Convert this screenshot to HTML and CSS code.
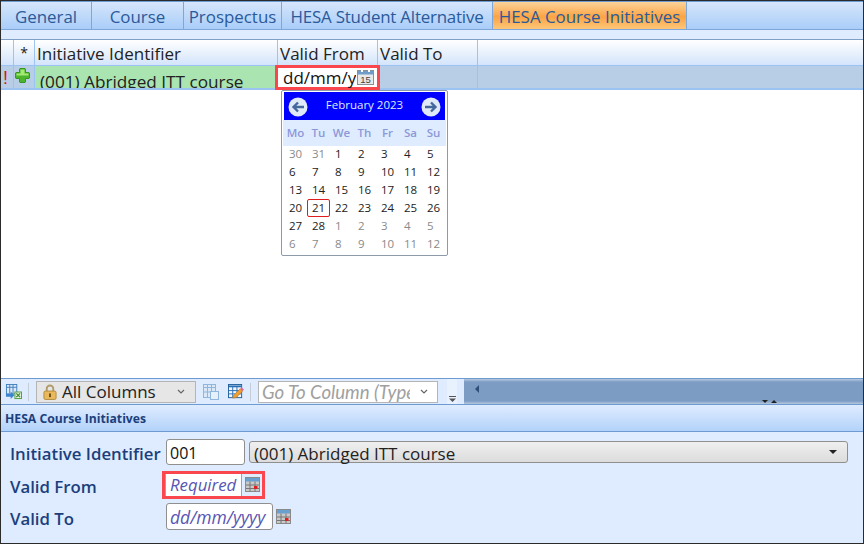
FILE: index.html
```html
<!DOCTYPE html>
<html lang="en">
<head>
<meta charset="utf-8">
<title>HESA Course Initiatives</title>
<link rel="stylesheet" href="styles.css">
</head>
<body>
<div class="app">
  <nav class="tabs">
    <div class="tab t1">General</div>
    <div class="tab t2">Course</div>
    <div class="tab t3">Prospectus</div>
    <div class="tab t4">HESA Student Alternative</div>
    <div class="tab t5 active">HESA Course Initiatives</div>
  </nav>
  <div class="band"></div>
  <section class="grid">
    <div class="ghead">
      <div class="c c0"></div>
      <div class="c c1 star">*</div>
      <div class="c c2">Initiative Identifier</div>
      <div class="c c3">Valid From</div>
      <div class="c c4">Valid To</div>
      <div class="c c5"></div>
    </div>
    <div class="grow">
      <div class="c c0 bang">!</div>
      <div class="c c1">
        <svg class="plus" width="15" height="15" viewBox="0 0 15 15"><path d="M5 .5h5l.5.5v3.500H14l.5.500v5l-.5.500h-3.500V14l-.5.500H5l-.5-.500v-3.500H1l-.5-.500V5L1 4.500h3.500V1z" fill="#4cb52c" stroke="#3a9424"/><path d="M5.500 1.500h4v4h4v2h-12v-2h4z" fill="#a4ea72"/></svg>
      </div>
      <div class="c c2 green"><span class="clip">(001) Abridged ITT course</span></div>
      <div class="c c3 edit">
        <span class="editor">dd/mm/yyyy</span>
        <svg class="cal15" width="17" height="15" viewBox="0 0 17 15"><rect x=".5" y=".5" width="16" height="14" fill="#e9e9e9" stroke="#8a8f96"/><rect x="1" y="1" width="15" height="3.500" fill="#6f9cc8"/><rect x="4" y="0" width="2" height="2" fill="#fff"/><rect x="11" y="0" width="2" height="2" fill="#fff"/><text x="8.500" y="13" font-size="9.500" text-anchor="middle" fill="#444" font-family="Liberation Sans">15</text></svg>
      </div>
      <div class="c c4"></div>
      <div class="c c5"></div>
    </div>
    <div class="calendar">
      <div class="calhead">
        <span class="navbtn"><svg width="20" height="20" viewBox="0 0 20 20"><circle cx="10" cy="10" r="9.500" fill="#dfe9f8"/><path d="M16 10H6M10 5.500 5.500 10l4.500 4.500" fill="none" stroke="#44689c" stroke-width="2.400"/></svg></span>
        <span class="month">February 2023</span>
        <span class="navbtn"><svg width="20" height="20" viewBox="0 0 20 20"><circle cx="10" cy="10" r="9.500" fill="#dfe9f8"/><path d="M4 10h10M10 5.500 14.500 10 10 14.500" fill="none" stroke="#44689c" stroke-width="2.400"/></svg></span>
      </div>
      <div class="week dow"><span>Mo</span><span>Tu</span><span>We</span><span>Th</span><span>Fr</span><span>Sa</span><span>Su</span></div>
      <div class="days">
        <span class="o">30</span><span class="o">31</span><span>1</span><span>2</span><span>3</span><span>4</span><span>5</span>
        <span>6</span><span>7</span><span>8</span><span>9</span><span>10</span><span>11</span><span>12</span>
        <span>13</span><span>14</span><span>15</span><span>16</span><span>17</span><span>18</span><span>19</span>
        <span>20</span><span class="today">21</span><span>22</span><span>23</span><span>24</span><span>25</span><span>26</span>
        <span>27</span><span>28</span><span class="o">1</span><span class="o">2</span><span class="o">3</span><span class="o">4</span><span class="o">5</span>
        <span class="o">6</span><span class="o">7</span><span class="o">8</span><span class="o">9</span><span class="o">10</span><span class="o">11</span><span class="o">12</span>
      </div>
    </div>
  </section>
  <div class="toolbar">
    <div class="tools">
      <svg class="ic first" width="17" height="16" viewBox="0 0 18 17"><rect x="1.500" y=".5" width="11" height="10" fill="#dbe8f8" stroke="#3f7fbf"/><path d="M1.500 3.500h11M5 1v9M8.500 1v9" stroke="#3f7fbf"/><path d="M1 10.500h5V8l4 4-4 4v-2.500H1z" fill="#3d84d0"/><rect x="10.500" y="8.500" width="7" height="7" fill="#e4f2dc" stroke="#4f9a3c"/><path d="m12 10 4 4m0-4-4 4" stroke="#3c8a2c" stroke-width="1.300"/></svg>
      <span class="sep"></span>
      <div class="combo">
        <svg class="lock" width="14" height="16" viewBox="0 0 15 17"><path d="M4 8V5a3.500 3.500 0 0 1 7 0v3" fill="none" stroke="#b09a6a" stroke-width="2"/><rect x="1" y="7.500" width="13" height="9" rx="1.500" fill="#e9b95c" stroke="#b08a3c"/><rect x="6.500" y="10" width="2" height="4" fill="#6b4c16"/></svg>
        <span class="combotext">All Columns</span>
        <svg class="chev" width="8" height="5" viewBox="0 0 8 5"><path d="m1 1 3 3 3-3" fill="none" stroke="#666" stroke-width="1.200"/></svg>
      </div>
      <svg class="ic dim" width="16" height="17" viewBox="0 0 16 17"><rect x=".5" y="1.500" width="12" height="13" fill="#dbe8f8" stroke="#8fb6dd"/><path d="M.5 4.500h12M4.500 2v12M8.500 2v12M1 9h11" stroke="#8fb6dd"/><rect x="7.500" y="8.500" width="8" height="8" fill="#e6f0fb" stroke="#8fb6dd"/></svg>
      <svg class="ic" width="16" height="16" viewBox="0 0 17 17"><rect x=".5" y=".5" width="14" height="14" fill="#f2f6fb" stroke="#1f5f9f"/><path d="M1 1.500h13v2H1z" fill="#2a6fb5"/><path d="M5 3v11M9.500 3v11M1 7h13M1 10.500h13" stroke="#2a6fb5"/><path d="m5 15 1-3 7-7 2.500 2.500-7 7z" fill="#f0a030" stroke="#c06a10" stroke-width=".6"/><path d="m13 5 1.500-1.500L17 6l-1.500 1.500z" fill="#d86aa0"/></svg>
      <span class="sep"></span>
      <div class="goto">
        <span class="gototext">Go To Column (Type</span>
        <svg class="chev2" width="8" height="5" viewBox="0 0 8 5"><path d="m1 1 3 3 3-3" fill="none" stroke="#666" stroke-width="1.200"/></svg>
      </div>
      <div class="overflow"><svg width="7" height="6" viewBox="0 0 7 6"><path d="M0 0h7v1H0zM0 2.500h7L3.500 6z" fill="#555"/></svg></div>
    </div>
    <div class="hscroll">
      <span class="leftarrow"></span>
      <span class="grip"><i class="down"></i><i class="up"></i></span>
    </div>
  </div>
  <h2 class="panelhead">HESA Course Initiatives</h2>
  <form class="panel">
    <div class="frow r1">
      <label class="lab">Initiative Identifier</label>
      <span class="input code">001</span>
      <div class="select"><span>(001) Abridged ITT course</span><svg width="8" height="4" viewBox="0 0 8 4"><path d="M0 0h8L4 4z" fill="#222"/></svg></div>
    </div>
    <div class="frow r2">
      <label class="lab">Valid From</label>
      <div class="hilite">
        <span class="input req">Required</span>
        <svg class="ic16" width="15" height="15" viewBox="0 0 15 15"><rect x=".5" y=".5" width="14" height="14" fill="#c9c9c9" stroke="#8a8a8a"/><rect x="1" y="1" width="13" height="3.500" fill="#6aa0d0"/><path d="M5 4.500v10M10 4.500v10M1 8h13M1 11.500h13" stroke="#777"/><rect x="9" y="9" width="3.500" height="3" fill="#e02020"/></svg>
      </div>
    </div>
    <div class="frow r3">
      <label class="lab">Valid To</label>
      <span class="input date">dd/mm/yyyy</span>
      <svg class="ic16" width="15" height="15" viewBox="0 0 15 15"><rect x=".5" y=".5" width="14" height="14" fill="#c9c9c9" stroke="#8a8a8a"/><rect x="1" y="1" width="13" height="3.500" fill="#6aa0d0"/><path d="M5 4.500v10M10 4.500v10M1 8h13M1 11.500h13" stroke="#777"/><rect x="9" y="9" width="3.500" height="3" fill="#e02020"/></svg>
    </div>
  </form>
</div>
</body>
</html>
```
FILE: styles.css
```css
* { box-sizing: border-box; }
html, body { margin: 0; padding: 0; }
body { width: 864px; height: 544px; overflow: hidden; font-family: "Open Sans", "Liberation Sans", sans-serif; background: #fff; }
.app { width: 864px; height: 544px; display: flex; flex-direction: column; border: 1px solid #2b2b2b; }

.tabs { height: 29px; flex: none; display: flex; border-top: 1px solid #6d9ad0; border-bottom: 1px solid #7ea6d8; background: linear-gradient(#d6e6fb, #a9cdf9); }
.tab { height: 27px; border-right: 1px solid #7ea6d8; font-size: 16.900px; line-height: 29px; color: #2a5a9a; text-align: center; white-space: nowrap; flex: none; }
.t1 { width: 91px; }
.t2 { width: 92px; }
.t3 { width: 98px; }
.t4 { width: 211px; letter-spacing: -.2px; }
.t5 { width: 194px; }
.active { background: linear-gradient(#fbd39b, #fba443 55%, #fdc67a); }

.band { height: 10px; flex: none; background: #dfecff; border-bottom: 1px solid #7f9fc4; }

.grid { flex: 1; position: relative; background: #fff; min-height: 0; }
.ghead { height: 26px; display: flex; background: linear-gradient(#fff, #d3e4fb); border-bottom: 1px solid #9cc3f2; }
.grow { height: 24px; display: flex; background: #b8cde6; border-bottom: 2px solid #9cc3f2; position: relative; }
.c { flex: none; border-right: 1px solid #9cc3f2; font-size: 17px; line-height: 27px; color: #222; padding-left: 2px; white-space: nowrap; overflow: hidden; }
.c0 { width: 13px; padding: 0; }
.c1 { width: 21px; padding: 0; }
.c2 { width: 243px; }
.c3 { width: 100px; }
.c4 { width: 100px; }
.c5 { flex: 1; border-right: 0; }
.star { text-align: center; line-height: 26px; font-size: 14px; }
.bang { color: #e01010; font-family: "Liberation Sans", sans-serif; font-size: 18px; line-height: 24px; padding-left: 2px; }
.plus { display: block; margin: 2px 0 0 1px; }
.green { background: #a9e4b1; }
.clip { display: block; height: 22px; line-height: 31px; overflow: hidden; padding-left: 3px; font-size: 17.200px; }
.c3.edit { position: relative; z-index: 2; width: 105px; height: 25px; margin: -1px -2px 0 -3px; border: 3px solid #f9474d; background: #fff; display: flex; align-items: center; padding: 0 0 0 5px; overflow: visible; }
.editor { font-size: 17px; width: 73px; flex: none; color: #111; line-height: 21px; overflow: hidden; white-space: nowrap; margin-right: 1px; }
.cal15 { flex: none; }

.calendar { position: absolute; left: 280px; top: 50px; width: 167px; height: 166px; background: #fff; border: 1px solid #8c9aaa; border-radius: 2px; padding: 1px; z-index: 3; }
.calhead { height: 28px; margin: 0 1px; background: #0000ff; display: flex; align-items: center; justify-content: space-between; padding: 0 4px; color: #dfe9ff; font-size: 11.500px; }
.month { padding-bottom: 3px; }
.navbtn { display: flex; width: 20px; height: 20px; margin-top: 1px; }
.week, .days { display: grid; grid-template-columns: repeat(7, 23px); }
.dow { height: 26px; background: #dfecff; line-height: 26px; font-size: 11.500px; color: #8d98d8; font-weight: 600; text-align: center; padding-left: 1px; }
.days { grid-auto-rows: 18px; font-size: 11.500px; line-height: 18px; color: #222; padding-left: 4px; margin-top: -1px; }
.days span { padding-left: 2px; }
.days .o { color: #8a8a8a; }
.days .today { border: 1px solid #e01c1c; border-radius: 2px; line-height: 16px; width: 23px; margin-left: -3px; padding-left: 4px; }

.toolbar { height: 27px; flex: none; display: flex; border-top: 1px solid #6d9ad0; background: #dfecff; border-bottom: 1px solid #6d9ad0; }
.tools { width: 463px; display: flex; align-items: center; flex: none; }
.ic { flex: none; display: block; }
.first { margin-left: 4px; }
.sep { width: 1px; height: 18px; background: #c4ccd6; margin: 0 7px 0 6px; flex: none; }
.combo { width: 160px; height: 22px; background: #e6e6e6; border: 1px solid #b5b5b5; display: flex; align-items: center; padding-left: 6px; margin-right: 7px; flex: none; }
.combotext { font-size: 17px; color: #222; margin-left: 5px; flex: 1; line-height: 21px; white-space: nowrap; }
.chev { margin-right: 10px; }
.lock { flex: none; }
.dim { margin-right: 9px; }
.goto { width: 180px; height: 22px; background: #fff; border: 1px solid #b5b5b5; display: flex; align-items: center; padding-left: 3px; flex: none; overflow: hidden; }
.gototext { font-family: "Lato", "Open Sans", sans-serif; font-style: italic; font-size: 18.600px; color: #a0a0a0; width: 148px; overflow: hidden; white-space: nowrap; flex: none; line-height: 20px; }
.chev2 { margin-left: 10px; flex: none; }
.overflow { width: 10px; height: 25px; margin-left: 9px; flex: none; display: flex; align-items: flex-end; justify-content: center; padding-bottom: 2px; background: #e8f1fe; }
.hscroll { flex: 1; display: flex; align-items: center; position: relative; background: linear-gradient(#b8c9de 0, #7c9cc4 3px, #7c9cc4 22px, #b8c9de 25px); }
.leftarrow { width: 0; height: 0; border: 4px solid transparent; border-right-color: #2f4f7a; border-left: 0; margin: -6px 0 0 11px; }
.grip { position: absolute; left: 298px; top: 21px; display: flex; gap: 3px; }
.grip i { width: 0; height: 0; border-left: 3px solid transparent; border-right: 3px solid transparent; }
.grip .down { border-top: 3px solid #222; }
.grip .up { border-bottom: 3px solid #222; }

.panelhead { margin: 0; height: 27px; flex: none; font-size: 12.200px; font-weight: 700; color: #1b3f7c; line-height: 28px; padding-left: 4px; background: linear-gradient(#dfecff, #b3d2fa); border-bottom: 1px solid #6d9ad0; }
.panel { flex: none; height: 111px; background: #dfecff; padding: 3px 0 0 9px; display: flex; flex-direction: column; }
.frow { display: flex; align-items: center; flex: none; }
.r1, .r2 { height: 33px; }
.r3 { height: 30px; }
.lab { width: 156px; font-size: 16.800px; font-weight: 600; color: #1b3f7c; white-space: nowrap; flex: none; padding-top: 4px; }
.input { display: block; background: #fff; border: 1px solid #8f8f8f; border-radius: 3px; font-size: 16px; padding-left: 3px; white-space: nowrap; overflow: hidden; flex: none; }
.code { width: 79px; height: 26px; line-height: 26px; color: #111; }
.select { width: 599px; height: 22px; margin-left: 4px; background: linear-gradient(#efefef, #dcdcdc); border: 1px solid #8f8f8f; border-radius: 3px; display: flex; align-items: center; justify-content: space-between; padding: 0 10px 0 4px; font-size: 17px; color: #222; line-height: 20px; }
.select span { position: relative; top: 2px; }
.hilite { display: flex; align-items: center; width: 103px; height: 28px; border: 3px solid #f9474d; margin-left: -4px; background: #dfecff; flex: none; }
.req { width: 77px; height: 22px; border: 0; border-left: 1px solid #e8952e; border-right: 1px solid #e8952e; border-radius: 0; line-height: 22px; font-size: 16.800px; font-style: italic; color: #5656b4; padding-left: 4px; margin-left: 0; }
.ic16 { flex: none; margin-left: 3px; }
.date { width: 107px; height: 27px; line-height: 27px; font-size: 17.500px; font-style: italic; color: #5656b4; padding-left: 3px; }
```
